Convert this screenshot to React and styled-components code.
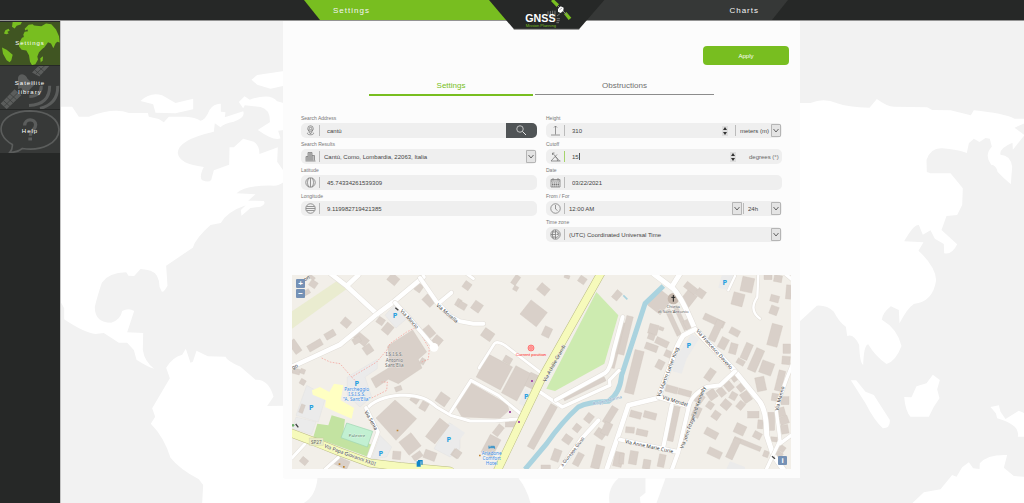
import React, { useState } from "react";
import styled, { createGlobalStyle } from "styled-components";

const GlobalStyle = createGlobalStyle`
  * {
    box-sizing: border-box;
  }
  body {
    margin: 0;
    background: #f2f2f2;
    font-family: "Liberation Sans", Arial, sans-serif;
  }
  button, input, select {
    font-family: inherit;
    margin: 0;
    padding: 0;
    border: 0;
    background: none;
    color: inherit;
  }
  a {
    color: inherit;
    text-decoration: none;
  }
`;

const Page = styled.div`
  display: flex;
  flex-direction: column;
  min-height: 100vh;
`;

const Header = styled.header`
  position: relative;
  z-index: 2;
  background: #262827;
  border-bottom: 1px solid #949494;
`;

const HeaderNav = styled.nav`
  display: flex;
  justify-content: center;
  padding-left: 68px;
`;

const HeaderLink = styled.a`
  width: 242px;
  height: 20px;
  padding: 0 29px;
  line-height: 22px;
  font-size: 8px;
  letter-spacing: 1px;
  color: #f4f4f4;
  text-align: ${(p) => (p.$end ? "right" : "left")};
  background: ${(p) => (p.$active ? "#78be20" : "#363837")};
  clip-path: ${(p) =>
    p.$end
      ? "polygon(0 0, 100% 0, calc(100% - 16px) 100%, 0 100%)"
      : "polygon(0 0, 100% 0, 100% 100%, 16px 100%)"};
`;

const LogoLink = styled.a`
  position: absolute;
  top: 0;
  left: calc(50% + 36px);
  width: 118px;
  transform: translateX(-50%);

  svg {
    display: block;
    width: 100%;
  }
`;

const Body = styled.div`
  display: flex;
  flex: 1;
`;

const Sidebar = styled.nav`
  display: flex;
  flex-direction: column;
  gap: 1px;
  width: 60px;
  padding-top: 1px;
  background: #262827;
`;

const SideLink = styled.a`
  display: grid;
  place-items: center;
  height: 43px;
  overflow: hidden;
  font-size: 6px;
  line-height: 9px;
  letter-spacing: 1px;
  text-align: center;
  color: #fff;
  background: ${(p) => (p.$active ? "#405522" : "#373938")};

  svg, span {
    grid-area: 1 / 1;
  }
  svg {
    width: 100%;
    height: 100%;
  }
  span {
    width: 40px;
  }
`;

const Main = styled.main`
  position: relative;
  flex: 1;
  padding: 0 224px 25px 222px;
  border-left: 1px solid #c4c4c4;
`;

const WorldSvg = styled.svg`
  position: absolute;
  inset: 0;
  width: 100%;
  height: 100%;
`;

const Panel = styled.section`
  position: relative;
  display: flex;
  flex-direction: column;
  padding: 25px 9px 9px;
  background: #fcfcfc;
`;

const ApplyButton = styled.button`
  align-self: flex-end;
  width: 86px;
  height: 19px;
  margin-right: 2px;
  border-radius: 4px;
  font-size: 6px;
  color: #fff;
  background: #78be20;
`;

const Tabs = styled.div`
  display: flex;
  align-items: flex-start;
  gap: 2px;
  margin-top: 15px;
  padding: 0 77px;
`;

const Tab = styled.button`
  flex: ${(p) => p.$grow} 1 0;
  padding-bottom: 2px;
  font-size: 8px;
  line-height: 12px;
  color: ${(p) => (p.$active ? "#78be20" : "#707070")};
  border-bottom: ${(p) => (p.$active ? "2px solid #78be20" : "1px solid #8c8c8c")};
`;

const Form = styled.form`
  display: grid;
  grid-template-columns: 1fr 1fr;
  gap: 9px;
  margin-top: 16px;
  padding: 0 9px;
`;

const Column = styled.div`
  display: flex;
  flex-direction: column;
`;

const Label = styled.label`
  display: block;
  padding-top: 2px;
  font-size: 5px;
  line-height: 9px;
  color: #777;
`;

const Box = styled.div`
  display: flex;
  align-items: center;
  height: 15px;
  overflow: hidden;
  border-radius: 5px;
  font-size: 6px;
  color: #444;
  background: #efefef;
`;

const IconCell = styled.span`
  display: flex;
  justify-content: center;
  width: 18px;

  svg {
    width: 11px;
    height: 11px;
    fill: none;
    stroke: #777;
  }
`;

const Divider = styled.span`
  width: 1px;
  height: 11px;
  background: ${(p) => (p.$focus ? "#a5d36c" : "#bbb")};
`;

const TextInput = styled.input`
  flex: ${(p) => (p.$narrow ? "none" : "1")};
  width: ${(p) => (p.$narrow ? "14px" : "auto")};
  min-width: 0;
  height: 15px;
  padding-left: 7px;
  font-size: 6px;
  outline: none;
`;

const Caret = styled.span`
  width: 1px;
  height: 7px;
  margin-right: auto;
  background: #555;
`;

const Unit = styled.span`
  width: 46px;
  padding-left: 13px;
  color: #666;
`;

const SearchButton = styled.button`
  display: flex;
  align-items: center;
  justify-content: center;
  width: 31px;
  height: 15px;
  background: #505456;

  svg {
    width: 11px;
    height: 11px;
    fill: none;
    stroke: #e4e4e4;
  }
`;

const SelectWrap = styled.span`
  display: grid;
  align-items: center;
  flex: ${(p) => (p.$width ? "none" : "1")};
  width: ${(p) => (p.$width ? `${p.$width}px` : "auto")};
  padding-right: 1px;

  select, svg {
    grid-area: 1 / 1;
  }
  select {
    width: 100%;
    height: 15px;
    padding-left: 4px;
    font-size: 6px;
    appearance: none;
    outline: none;
  }
  svg {
    justify-self: end;
    width: 10px;
    height: 13px;
    pointer-events: none;
  }
`;

const Stepper = styled.span`
  display: flex;
  flex-direction: column;
  width: 6px;
  margin-right: ${(p) => (p.$wide ? "7px" : "0")};
  background: #dedede;

  button {
    display: block;
    height: 5px;
  }
  svg {
    display: block;
    width: 6px;
    height: 5px;
  }
`;

const MapFrame = styled.div`
  position: relative;
  margin-top: 33px;
`;

const MapSvg = styled.svg`
  display: block;
  width: 100%;
  font-family: "Noto Sans", sans-serif;
`;

const MapControls = styled.div`
  position: absolute;
  display: flex;
  flex-direction: column;
  gap: 1px;
  ${(p) => (p.$corner ? "right: 4px; bottom: 4px;" : "left: 4px; top: 4px;")}
`;

const MapButton = styled.button`
  width: 9px;
  height: 9px;
  border-radius: 1px;
  font-size: 8px;
  font-weight: bold;
  line-height: 9px;
  color: #fff;
  background: #7591b5;
`;

/* ---------- icons ---------- */

const icons = {
  pin: (
    <>
      <circle cx="11" cy="7" r="5.5" />
      <circle cx="11" cy="7" r="2.5" />
      <path d="M6 9l5 9 5-9M6 15c-6 6 16 6 10 0" />
    </>
  ),
  city: (
    <>
      <path d="M6 19V3h8v16M2 19V11h4M14 9h5v10M1 20h20" />
      <path d="M8 4v15M10 4v15M12 4v15M4 12v7M16 10v9" />
    </>
  ),
  latitude: (
    <>
      <circle cx="11" cy="11" r="9.5" />
      <path d="M8 2c-4 5-4 13 0 18M14 2c4 5 4 13 0 18M11 2v18" />
    </>
  ),
  longitude: (
    <>
      <circle cx="11" cy="11" r="9.5" />
      <path d="M3 7h16M2 11h18M3 15h16" />
    </>
  ),
  height: <path d="M11 19V2M8 5l3-3 3 3M2 20h18" />,
  cutoff: <path d="M2 20h19M2 20L14 7M5 4l14 16M5 4v4M5 4h4M10 11c4 2 5 5 5 9" />,
  date: (
    <>
      <path d="M2 5h18v15H2zM2 8h18M6 2v5M16 2v5" />
      <path d="M4 12h14M4 15h14M4 18h14" strokeWidth="2" strokeDasharray="3 1" />
    </>
  ),
  clock: (
    <>
      <circle cx="11" cy="11" r="9.5" />
      <path d="M11 4v8l4 3" />
    </>
  ),
  zone: (
    <>
      <circle cx="11" cy="11" r="9.5" />
      <path d="M11 2v18M2 11h9M4 6h7M4 16h7M7 3c-3 5-3 11 0 16M11 5c9 0 9 12 0 12M13 11h3V7" />
    </>
  ),
  search: (
    <>
      <circle cx="8" cy="8" r="6.5" />
      <path d="M13 13l7 7" strokeWidth="2" />
    </>
  ),
};

function Icon({ name }) {
  return (
    <svg viewBox="0 0 22 22" strokeWidth="1.5" aria-hidden="true">
      {icons[name]}
    </svg>
  );
}

function Logo() {
  return (
    <svg viewBox="27 0 354 90" role="img" aria-label="GNSS Mission Planning">
      <path d="M27 0H373L297 88H102Z" fill="#262827" />
      <path d="M101 88H298" stroke="#949494" strokeWidth="3" />
      <g fill="none" stroke="#777" strokeWidth="3">
        <path d="M204 34v11M211 33v15M218 32v18M225 32v20M230 56h10M230 62h9M229 68h8M231 48l8-6" />
      </g>
      <g fill="#78be20">
        <path d="M213 3l7-6 17 16-7 8zM252 42l7-6 15 17-8 7z" />
      </g>
      <path d="M233 17l28 28" stroke="#888" strokeWidth="3" />
      <path d="M234 27l8-8 9 4-1 9-8 7-8-4z" fill="#fff" />
      <path d="M238 30l8-6" stroke="#777" strokeWidth="2" />
      <text x="136" y="66" fontSize="32" fontWeight="bold" fill="#fff">GNSS</text>
      <text x="137" y="80" fontSize="12" fill="#78be20">Mission Planning</text>
    </svg>
  );
}

function GlobeArt() {
  return (
    <svg viewBox="0 65 180 130" preserveAspectRatio="xMidYMid slice" aria-hidden="true">
      <g fill="#78be20">
        <path d="M38 65h28l-4 8-12 4-6 8-8-5zM12 100l4-10 10-4 3 6-7 3 4 5-7 2zM6 142l14 7 18 15-4 16-5 6-9-6-11-19z" />
        <path d="M58 127l8-14 12-5 14 5 22 2 14 18 3 9-14 14-5 13 2 9-8 14-10 3-6-10-3-20-8-14-14-2-8-10z" />
        <path d="M70 103l4-8 10-2-2-6-6 4-2-5 12-12 12-2 4 4 22 2 14-8 16 2 14 16 9 20 2 19-7-2-5 4-7 15-7-14-9-4-3 5-9 12-10 2-8-16-2-7-12 2-3-7-8 1-4-6-8 4-4 2z" />
        <path d="M121 174l8-6-1 12-6 7z" />
      </g>
    </svg>
  );
}

function SatelliteArt() {
  return (
    <svg viewBox="0 198 180 130" preserveAspectRatio="xMidYMid slice" aria-hidden="true">
      <g fill="#5b5d5c">
        <path d="M2 311l42-43 20 18-44 42zM96 218l24-24 30 2-32 34z" />
        <path d="M54 240q-2-15 12-17 13 2 16 13l12 12 8-4 4 8-16 16q-8 14-22 6l-4-10-10 4z" />
      </g>
      <path d="M10 302l20 18M20 292l20 18M30 282l20 18M12 320l42-42M104 210l20 18M115 200l20 18M108 222l32-30" stroke="#373938" strokeWidth="2" />
      <path d="M88 290q36-1 36-32M87 317q62-2 62-59M120 326q55-14 53-68" fill="none" stroke="#5b5d5c" strokeWidth="9" />
    </svg>
  );
}

function HelpArt() {
  return (
    <svg viewBox="0 329 180 130" preserveAspectRatio="xMidYMid slice" aria-hidden="true">
      <path d="M37 433C-24 399 0 333 90 332c57 1 86 27 87 57-1 40-52 65-110 56-9 7-19 12-38 12 6-7 9-15 8-24z" fill="none" stroke="#5b5d5c" strokeWidth="5" />
      <path d="M74 376c0-22 32-22 33-2 0 16-16 15-16 33" fill="none" stroke="#5b5d5c" strokeWidth="10" />
      <path d="M85 412h11v9H85z" fill="#5b5d5c" />
    </svg>
  );
}

function World() {
  return (
    <WorldSvg viewBox="0 3 2892 1446" preserveAspectRatio="xMidYMin slice" aria-hidden="true">
      <g fill="#fff">
        {/* Americas */}
        <path d="M0 260H35L55 290H85Q160 262 205 279H262L265 290 295 297 310 307 325 290H375Q405 292 420 302 435 300 447 270 460 250 481 251V275L495 277 493 292 548 274Q556 292 520 305 490 310 480 322L463 310 460 335Q350 360 352 400 357 433 430 441 415 470 425 481 445 489 452 480L460 451 506 434 507 382 520 382 548 356 580 365Q597 377 597 402L652 382 650 425 671 455V485Q655 497 640 497 555 495 528 520L585 523 563 542 610 543Q617 553 600 560L570 564 543 587 541 570 556 556Q500 575 481 609L450 615Q405 655 397 683L317 737 321 797Q310 818 304 815L297 800Q296 760 270 752 250 747 240 747L221 768 204 767 197 757Q145 758 124 788 110 830 103 860 102 908 152 908 180 900 185 873 205 863 221 873L200 937 248 939 247 990Q252 1025 281 1046 260 1040 228 1019L220 990 200 968 175 968 130 939 105 942Q70 938 11 898V865L0 845Z" />
        <path d="M240 243Q270 215 305 226L345 249 398 236V268L345 280 285 278 278 253ZM573 179L590 165 671 153V197L630 206 590 194Z" />
        <path d="M535 246L552 229 568 239Q630 218 650 244L671 250V330L653 332 660 355Q640 364 592 330 615 315 628 307 630 268 600 261L553 256 548 265Z" />
        <path d="M317 1043Q335 1012 365 1004L376 986 390 1028 397 1025 408 992 442 1009 495 1010Q500 1023 540 1040L585 1079Q625 1077 639 1130L620 1158 671 1157V1375H771Q765 1430 730 1449H425L428 1395 415 1378Q355 1345 330 1313 310 1250 271 1211L284 1190 275 1165 328 1075Z" />
        <path d="M1374 1375H1674Q1640 1405 1647 1449H1410Q1398 1405 1374 1375ZM1755 1375H1815L1788 1449H1740L1738 1432 1755 1418Z" />
      </g>
      {/* Asia and Oceania */}
      <g fill="#fff" transform="translate(2190 0)">
        <path d="M0 249H60Q100 232 140 250 170 262 237 263L259 237Q290 260 310 260L410 262 425 270 480 271 541 286 550 271Q640 280 672 296H702V310L672 323 702 345 667 389 666 368Q625 385 630 404 660 405 665 440L661 493Q640 475 621 455 617 435 602 434 580 405 604 380L598 356 585 354 567 366 550 356 535 370 529 399Q500 388 455 385 420 383 408 420L409 456 420 460 480 460 517 505 515 555 500 585 468 588 453 630 500 673Q485 705 461 700L460 672 433 656 420 631 397 644 385 615Q370 612 341 664L399 667 384 692Q435 740 437 780 428 845 370 852 350 865 327 910L325 870 301 859Q275 880 274 899 320 925 333 978 315 1025 288 1032 255 1010 233 973 220 975 218 1035 208 1030 206 975 190 940 170 948L166 920Q145 905 130 875 110 855 79 857L29 903H0Z" />
        <path d="M181 1081L197 1081 225 1115 250 1125 298 1200Q300 1225 277 1225 250 1200 225 1150ZM341 1131L363 1132 378 1099 408 1090 427 1064 448 1080 440 1108 447 1135 430 1160 415 1190H360Q345 1175 341 1131ZM600 1161L625 1156 630 1175 645 1197 685 1172 702 1180V1250H682Q690 1215 620 1195L616 1180Z" />
        <path d="M366 1449L400 1417 450 1408 485 1365 498 1370 515 1342 535 1327 548 1345 567 1347 568 1330Q590 1303 650 1305L640 1343 670 1368 702 1370V1449Z" />
      </g>
    </WorldSvg>
  );
}

/* ---------- street map ---------- */

// [centre x, centre y, width, height, rotation]
const westBuildings = [
  [310, 22, 30, 26, 40], [70, 36, 22, 20, 35], [48, 62, 24, 14, -30], [65, 16, 20, 10, 35],
  [168, 152, 26, 24, 40], [120, 188, 32, 20, -30], [75, 220, 46, 20, -30], [15, 224, 22, 42, -35],
  [38, 330, 16, 16, 30], [18, 298, 24, 16, 15], [38, 298, 14, 14, 20], [213, 200, 46, 24, 40],
  [200, 205, 24, 18, -30], [234, 232, 26, 26, -35], [272, 147, 22, 20, 35], [293, 170, 26, 30, 40],
  [386, 47, 22, 24, 35], [416, 86, 34, 24, 45], [416, 180, 28, 34, -40], [442, 206, 26, 26, 40],
  [325, 350, 20, 14, -20], [402, 402, 22, 26, 30], [458, 382, 34, 32, 35], [374, 383, 24, 18, 35],
  [442, 477, 36, 70, 38], [360, 516, 46, 50, -38], [320, 550, 24, 24, 5], [497, 545, 22, 22, 35],
  [420, 550, 36, 26, 20], [42, 567, 22, 18, 40], [155, 572, 44, 26, 25], [36, 410, 12, 26, 20],
  [382, 552, 30, 18, -35], [398, 268, 14, 18, 30], [505, 92, 14, 22, 30],
];

const centreBuildings = [
  [36, 41, 22, 22, 35], [182, 24, 16, 30, 35], [182, 49, 14, 14, 30], [265, 52, 32, 26, 40],
  [22, 101, 24, 20, 30], [66, 104, 28, 28, 35], [236, 124, 62, 54, 38], [276, 180, 24, 30, 25],
  [98, 188, 34, 28, 35], [382, 24, 22, 20, 35], [336, 14, 16, 10, 20], [486, 70, 20, 28, 40],
  [118, 300, 82, 78, 28], [158, 264, 24, 20, 30], [184, 334, 52, 92, 28], [230, 326, 26, 44, 25],
  [170, 457, 38, 16, 0], [130, 475, 20, 34, 38], [108, 522, 36, 60, 28], [262, 464, 22, 146, 29],
  [402, 438, 22, 26, 38], [366, 468, 20, 22, 38], [337, 502, 26, 24, 35], [304, 550, 24, 36, 20],
  [436, 485, 30, 26, 35], [466, 430, 22, 56, 32], [428, 555, 26, 70, 15], [370, 562, 20, 40, 28],
  [490, 562, 26, 44, 12], [388, 350, 138, 14, -26], [272, 586, 28, 14, 0], [6, 545, 22, 22, 35],
  [455, 470, 24, 38, 25], [488, 220, 14, 140, 14],
];

const eastBuildings = [
  [120, 90, 48, 60, 38], [205, 80, 34, 44, 38], [212, 48, 40, 20, 38], [242, 64, 26, 24, 35],
  [160, 152, 14, 84, -25], [182, 138, 12, 78, -25], [205, 156, 24, 28, -25], [100, 172, 28, 30, 15],
  [94, 194, 20, 18, 20], [124, 170, 14, 10, 20], [126, 211, 40, 20, 25], [94, 226, 38, 20, 20],
  [145, 246, 22, 20, 25], [120, 278, 22, 26, 28], [43, 300, 28, 132, 14], [16, 190, 20, 118, 14],
  [282, 146, 66, 20, 25], [288, 176, 22, 66, 25], [344, 180, 30, 20, 28], [310, 214, 24, 34, 28],
  [340, 230, 22, 32, 15], [380, 238, 22, 50, 24], [408, 264, 26, 70, 24], [440, 288, 38, 38, 20],
  [362, 270, 24, 16, 30], [464, 190, 32, 66, 15], [462, 115, 24, 26, 20], [464, 80, 26, 20, 15],
  [382, 38, 36, 44, 12], [354, 82, 34, 38, 15], [444, 15, 24, 16, 0], [474, 20, 24, 20, 10],
  [506, 60, 16, 42, 5], [500, 230, 22, 28, 0], [498, 265, 24, 24, 5], [270, 308, 22, 36, 35],
  [155, 352, 36, 20, 15], [194, 362, 40, 18, 15], [238, 380, 24, 28, 35], [230, 420, 22, 32, 25],
  [276, 368, 26, 28, -35], [304, 360, 20, 26, -40], [326, 342, 22, 28, -40], [270, 400, 20, 20, 35],
  [288, 430, 22, 24, 35], [318, 398, 26, 26, 40], [340, 372, 20, 22, 30], [362, 400, 20, 24, 40],
  [378, 375, 26, 32, -35], [364, 346, 22, 22, -40], [344, 320, 16, 16, -35], [422, 336, 28, 42, -12],
  [480, 326, 20, 62, 14], [400, 428, 34, 20, 0], [421, 457, 16, 26, 5], [454, 448, 20, 54, 0],
  [466, 376, 22, 22, 10], [495, 386, 24, 24, 0], [484, 420, 22, 26, -15], [492, 445, 26, 24, -20],
  [494, 472, 22, 26, -10], [462, 502, 20, 14, 5], [47, 428, 34, 20, 15], [90, 430, 38, 20, 15],
  [30, 474, 26, 18, 5], [66, 482, 34, 18, 12], [160, 455, 20, 106, 12], [274, 484, 40, 22, 28],
  [284, 543, 42, 22, 25], [360, 472, 32, 30, 25], [412, 490, 24, 20, 28], [382, 516, 86, 14, 22],
  [340, 530, 22, 64, 25], [40, 557, 24, 40, 10], [80, 577, 22, 28, 10], [125, 566, 20, 38, 12],
  [5, 560, 14, 32, 5], [438, 546, 16, 18, 20], [474, 552, 20, 28, 35], [486, 530, 18, 18, 35],
];

function Buildings({ items }) {
  return (
    <g fill="#d9d0c9" stroke="#cfc5bd" strokeWidth="1">
      {items.map(([x, y, w, h, r], i) => (
        <rect key={i} x={x - w / 2} y={y - h / 2} width={w} height={h} transform={`rotate(${r} ${x} ${y})`} />
      ))}
    </g>
  );
}

function Road({ d, width = 14, main }) {
  return (
    <g fill="none" strokeLinejoin="round" strokeLinecap="round">
      <path d={d} stroke={main ? "#b9bb83" : "#e2ded8"} strokeWidth={width + 3} />
      <path d={d} stroke={main ? "#f6fabb" : "#fff"} strokeWidth={width} />
    </g>
  );
}

function Street({ x, y, angle, size = 15, fill = "#333", children }) {
  return (
    <text x={x} y={y} fontSize={size} fill={fill} stroke="#fff" strokeWidth="1" paintOrder="stroke" transform={`rotate(${angle} ${x} ${y})`}>
      {children}
    </text>
  );
}

function Place({ x, y, lines, fill = "#555", size = 14, gap = 17 }) {
  return (
    <text fontSize={size} fill={fill} textAnchor="middle" stroke="#fff" strokeWidth="1" paintOrder="stroke">
      {lines.map((line, i) => (
        <tspan key={line} x={x} y={y + i * gap}>{line}</tspan>
      ))}
    </text>
  );
}

function Parking({ x, y }) {
  return (
    <text x={x} y={y} fontSize="22" fontWeight="bold" fill="#29a0e0" textAnchor="middle">P</text>
  );
}

function StreetMap() {
  return (
    <MapSvg viewBox="6 9 1497 582" role="img" aria-label="Street map">
      <path d="M0 0H1510V600H0Z" fill="#f2efe9" />
      <g>
        <path d="M6 118L142 26 174 48 6 170Z" fill="#eaecd0" />
        <g fill="#ebebeb" stroke="#ddd">
          <path d="M285 130L315 98 350 140 318 168Z" />
          <path d="M172 315L262 262 262 290 225 315 245 375 210 405 172 370Z" />
          <path d="M50 340L108 372 85 450 18 430ZM18 435L78 450 65 487 8 470ZM478 452L510 475V530L480 555 432 530ZM270 490L305 525 290 555 245 560Z" />
        </g>
        <path d="M66 355L90 345 118 360 132 335 160 340 152 385 192 408 185 440 150 425 105 405 108 385 68 368Z" fill="#ffffc2" />
        <path d="M125 430L165 442 160 480 248 520 235 555 70 495 82 455 115 460Z" fill="#c3e3a1" />
        <path d="M170 453L248 478 232 525 153 497Z" fill="#c2f0d2" stroke="#9fd4b0" strokeWidth="2" />
        <Buildings items={westBuildings} />
        <g fill="#d9d0c9" stroke="#cfc5bd">
          <path d="M293 222L368 174 410 240 385 262 396 288 325 335 295 322 258 348 243 320 300 285Z" />
          <path d="M258 438L315 384 380 440 318 505Z" />
        </g>
        <path d="M95 258L120 270 150 275 185 315 260 270 290 235 300 215 350 180 380 165 418 230 415 262 395 270M185 315L200 330M245 378L290 355 292 330 275 330M315 95L380 165" fill="none" stroke="#f59a92" strokeWidth="2" strokeDasharray="5 4" />
      </g>
      <g transform="translate(495 0)">
        <path d="M424 60L490 130 448 275 300 357 274 350Z" fill="#cdebb0" />
        <path d="M210 350L240 365 210 405 192 395ZM-10 455L30 482 5 515-20 510Z" fill="#ebebeb" />
        <Buildings items={centreBuildings} />
        <path d="M48 332L158 396 163 415 135 440 20 436 0 400Z" fill="#d9d0c9" />
      </g>
      <g transform="translate(990 0)">
        <path d="M305 10H345L330 55 295 48ZM215 185L237 200 200 260 185 305 158 298 165 260ZM330 568L375 585V600H315Z" fill="#ebebeb" />
        <Buildings items={eastBuildings} />
        <circle cx="160" cy="80" r="17" fill="#c4b6ab" />
      </g>
      <path d="M705 592L770 515Q815 450 865 405 895 390 955 388 990 365 995 310L1065 95 1120 42" fill="none" stroke="#aad3df" strokeWidth="15" strokeLinejoin="round" />
      <path d="M1000 70l12 12" stroke="#aad3df" strokeWidth="5" />

      <g>
        <Road d="M205 9L170 42L122 5M170 42L262 127" />
        <Road d="M0 287L70 255L150 218Q185 190 260 127L310 90L400 15" />
        <Road d="M315 92L355 135L432 225" width={12} />
        <circle cx="432" cy="226" r="13" fill="#fff" />
        <Road d="M390 18L440 90L480 132L510 148L550 155H580M448 92L484 62" width={12} />
        <Road d="M228 412Q260 375 330 370T440 405L482 430L540 447H615L695 440M482 420L543 325L625 370L700 432" width={9} />
        <Road d="M228 408L264 480L235 560" width={11} />
        <Road d="M6 558L50 510M105 592L145 556M530 5L550 20" width={9} />
        <Road d="M0 482L70 508L150 540L240 573L330 584L480 597" width={23} main />
      </g>
      <g transform="translate(495 0)">
        <Road d="M72 288L118 215Q125 205 150 220L265 308" width={8} />
        <Road d="M255 360L322 405L465 340L463 325L492 295" width={10} />
        <Road d="M302 384L450 303Q465 295 475 240L503 135" width={12} />
        <Road d="M430 445L380 500L315 592" width={12} />
        <Road d="M440 0L262 315L125 600" width={22} main />
      </g>
      <g transform="translate(990 0)">
        <Road d="M100 5L160 50Q185 75 225 172L345 298L420 390Q440 420 440 490L460 550L490 592M155 45L180 5" width={15} />
        <Road d="M225 172L190 190Q170 220 160 255L115 378L25 400L0 475L-40 592" width={14} />
        <Road d="M345 298L300 340L260 345Q210 370 205 410L175 540L155 595M115 375L205 403M155 400L130 525M0 503L175 540" width={12} />
        <Road d="M345 12L325 55M415 5L412 75Q385 115 420 140" width={7} />
        <Road d="M520 270L500 320L468 410L480 505L440 590M480 515L520 485M495 5L515 22" width={10} />
      </g>

      <g>
        <path d="M58 498H100V520H58Z" fill="#ebeccb" stroke="#c5c59a" />
        <text x="63" y="515" fontSize="14" fill="#666">SP27</text>
        <Street x={102} y={526} angle={20}>Via Papa Giovanni XXIII</Street>
        <Street x={330} y={118} angle={47}>Via Mincio</Street>
        <Street x={438} y={101} angle={41}>Via Mosella</Street>
        <Street x={223} y={420} angle={60}>Via Senia</Street>
        <Street x={8} y={292} angle={-25}>go</Street>
        <Street x={45} y={28} angle={-30}>on</Street>
        <Place x={313} y={252} lines={["I.S.I.S.S.", "Antonio", "Sant'Elia"]} fill="#666" />
        <Place x={200} y={358} lines={["Parcheggio", "I.S.I.S.S.", '"A. Sant\'Elia"']} fill="#3287e0" gap={15} />
        <Place x={201} y={496} lines={["Palestre"]} fill="#35744b" size={13} />
        <Parking x={315} y={138} />
        <Parking x={200} y={343} />
        <Parking x={64} y={414} />
        <Parking x={272} y={551} />
        <Parking x={476} y={511} />
        <path d="M380 568h12v16h-12zM384 564h14v14h-4v-10h-10z" fill="#0e86c8" />
        <path d="M320 473h5v5h-5zM146 574h5v5h-5zM159 582h5v5h-5z" fill="#c08431" />
        <path d="M316 107l9 8M17 456l8 10" stroke="#444" strokeWidth="4" />
        <circle cx="9" cy="460" r="4" fill="#6cae68" />
      </g>
      <g transform="translate(495 0)">
        <Street x={272} y={330} angle={-61}>Via Achille Grandi</Street>
        <Street x={323} y={584} angle={-52} size={13}>a Giuseppe Giusti</Street>
        <Street x={415} y={400} angle={-14} size={13} fill="#6a96ba">Roggia Marina</Street>
        <Place x={110} y={550} lines={["Ariadone", "Comfort", "Hotel"]} fill="#3287e0" gap={15} />
        <path d="M102 521v9M102 527h17v3M106 523h12v4" fill="none" stroke="#2c8ec8" strokeWidth="3" />
        <Parking x={214} y={382} />
        <path d="M228 324h6v6h-6zM162 417h6v6h-6zM189 447h6v6h-6z" fill="#a855a8" />
        <path d="M72 548h5v5h-5z" fill="#c08431" />
        <circle cx="228" cy="228" r="9" fill="#ffaaa8" stroke="#f55" strokeWidth="2" />
        <circle cx="228" cy="228" r="4" fill="none" stroke="#f77" strokeWidth="2" />
        <text x="228" y="251" fontSize="13" fill="#f22" textAnchor="middle" fontFamily="Liberation Sans">Current position</text>
      </g>
      <g transform="translate(990 0)">
        <Street x={228} y={178} angle={48}>Via Francesco Daverio</Street>
        <Street x={120} y={376} angle={-69}>Via Martin Luther King</Street>
        <Street x={190} y={530} angle={-70}>Via John Fitzgerald Kennedy</Street>
        <Street x={127} y={380} angle={18}>Via Mendel</Street>
        <Street x={14} y={513} angle={12}>Via Anne Marie Curie</Street>
        <Street x={475} y={417} angle={-76}>Via Manno</Street>
        <Place x={160} y={107} lines={["Chiesa", "di Sant'Antonio"]} fill="#555" size={13} gap={15} />
        <path d="M160 69v20M154 76h12" stroke="#222" strokeWidth="3" />
        <Parking x={206} y={227} />
        <Parking x={314} y={39} />
        <path d="M456 553l9 7" stroke="#444" strokeWidth="4" />
      </g>
    </MapSvg>
  );
}

/* ---------- form parts ---------- */

function Field({ id, label, icon, focus, children }) {
  return (
    <div>
      <Label htmlFor={id}>{label}</Label>
      <Box>
        <IconCell>
          <Icon name={icon} />
        </IconCell>
        <Divider $focus={focus} />
        {children}
      </Box>
    </div>
  );
}

function Select({ id, value, width, label }) {
  return (
    <SelectWrap $width={width}>
      <select id={id} aria-label={label} defaultValue={value}>
        <option>{value}</option>
      </select>
      <svg viewBox="0 0 20 26" aria-hidden="true">
        <path d="M1 1h18v24H1z" fill="#e4e4e4" stroke="#b5b5b5" strokeWidth="2" />
        <path d="M5 10l5 6 5-6" fill="none" stroke="#666" strokeWidth="2" />
      </svg>
    </SelectWrap>
  );
}

function NumberStepper({ wide, onStep }) {
  return (
    <Stepper $wide={wide}>
      <button type="button" aria-label="Increase" onClick={() => onStep(1)}>
        <svg viewBox="0 0 12 10"><path d="M2 8l4-6 4 6z" fill="#333" /></svg>
      </button>
      <button type="button" aria-label="Decrease" onClick={() => onStep(-1)}>
        <svg viewBox="0 0 12 10"><path d="M2 2l4 6 4-6z" fill="#333" /></svg>
      </button>
    </Stepper>
  );
}

function SettingsForm() {
  const [height, setHeight] = useState(310);
  const [cutoff, setCutoff] = useState(15);

  return (
    <Form id="settings-form" onSubmit={(e) => e.preventDefault()}>
      <Column>
        <Field id="address" label="Search Address" icon="pin">
          <TextInput id="address" defaultValue="cantù" />
          <SearchButton type="button" aria-label="Search">
            <Icon name="search" />
          </SearchButton>
        </Field>
        <Field id="results" label="Search Results" icon="city">
          <Select id="results" value="Cantù, Como, Lombardia, 22063, Italia" />
        </Field>
        <Field id="latitude" label="Latitude" icon="latitude">
          <TextInput id="latitude" defaultValue="45.74334261539309" />
        </Field>
        <Field id="longitude" label="Longitude" icon="longitude">
          <TextInput id="longitude" defaultValue="9.119982719421385" />
        </Field>
      </Column>
      <Column>
        <Field id="height" label="Height" icon="height">
          <TextInput id="height" value={height} onChange={(e) => setHeight(e.target.value)} />
          <NumberStepper wide onStep={(n) => setHeight(Number(height) + n)} />
          <Divider />
          <Select value="meters (m)" label="Height unit" width={46} />
        </Field>
        <Field id="cutoff" label="Cutoff" icon="cutoff" focus>
          <TextInput id="cutoff" $narrow value={cutoff} onChange={(e) => setCutoff(e.target.value)} />
          <Caret />
          <NumberStepper onStep={(n) => setCutoff(Number(cutoff) + n)} />
          <Unit>degrees (°)</Unit>
        </Field>
        <Field id="date" label="Date" icon="date">
          <TextInput id="date" defaultValue="03/22/2021" />
        </Field>
        <Field id="from" label="From / For" icon="clock">
          <Select id="from" value="12:00 AM" />
          <Divider />
          <Select value="24h" label="Duration" width={38} />
        </Field>
        <Field id="timezone" label="Time zone" icon="zone">
          <Select id="timezone" value="(UTC) Coordinated Universal Time" />
        </Field>
      </Column>
    </Form>
  );
}

function App() {
  const [tab, setTab] = useState("settings");

  return (
    <Page>
      <GlobalStyle />
      <Header>
        <HeaderNav>
          <HeaderLink href="#settings" $active>Settings</HeaderLink>
          <HeaderLink href="#charts" $end>Charts</HeaderLink>
        </HeaderNav>
        <LogoLink href="#home">
          <Logo />
        </LogoLink>
      </Header>
      <Body>
        <Sidebar>
          <SideLink href="#settings" $active>
            <GlobeArt />
            <span>Settings</span>
          </SideLink>
          <SideLink href="#library">
            <SatelliteArt />
            <span>Satellite library</span>
          </SideLink>
          <SideLink href="#help">
            <HelpArt />
            <span>Help</span>
          </SideLink>
        </Sidebar>
        <Main>
          <World />
          <Panel>
            <ApplyButton type="submit" form="settings-form">Apply</ApplyButton>
            <Tabs role="tablist">
              <Tab role="tab" $grow={11} $active={tab === "settings"} onClick={() => setTab("settings")}>
                Settings
              </Tab>
              <Tab role="tab" $grow={12} $active={tab === "obstructions"} onClick={() => setTab("obstructions")}>
                Obstructions
              </Tab>
            </Tabs>
            <SettingsForm />
            <MapFrame>
              <StreetMap />
              <MapControls>
                <MapButton aria-label="Zoom in">+</MapButton>
                <MapButton aria-label="Zoom out">−</MapButton>
              </MapControls>
              <MapControls $corner>
                <MapButton aria-label="Attributions">i</MapButton>
              </MapControls>
            </MapFrame>
          </Panel>
        </Main>
      </Body>
    </Page>
  );
}

export default App;
